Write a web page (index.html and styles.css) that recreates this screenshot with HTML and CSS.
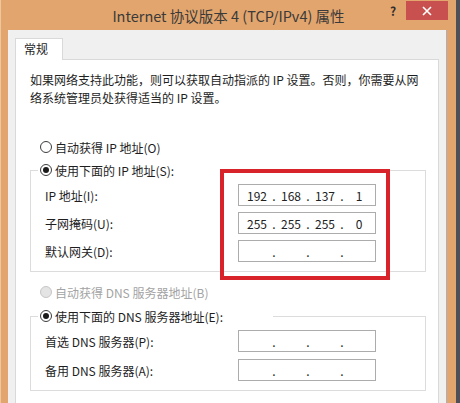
FILE: index.html
```html
<!DOCTYPE html>
<html lang="zh-CN">
<head>
  <meta charset="UTF-8">
  <title>Internet 协议版本 4 (TCP/IPv4) 属性</title>
  <link rel="stylesheet" href="styles.css">
</head>
<body>
  <div class="window">
    <div class="titlebar">
      <div></div>
      <div class="title">Internet 协议版本 4 (TCP/IPv4) 属性</div>
      <div class="title-btns">
        <span class="help-btn">?</span>
        <span class="close-btn">
          <svg width="10" height="10" viewBox="0 0 10 10"><path d="M1 1 L9 9 M9 1 L1 9" stroke="#fff" stroke-width="1.6" fill="none"/></svg>
        </span>
      </div>
    </div>

    <div class="client">
      <div class="tabs">
        <div class="tab active">常规</div>
      </div>

      <div class="tab-page">
        <p class="intro">如果网络支持此功能，则可以获取自动指派的 IP 设置。否则，你需要从网<br>络系统管理员处获得适当的 IP 设置。</p>

        <div class="radio-row first"><span class="radio"></span>自动获得 IP 地址(O)</div>

        <fieldset class="group">
          <legend class="radio-row"><span class="radio checked"></span>使用下面的 IP 地址(S):</legend>
          <div class="field-row">
            <span>IP 地址(I):</span>
            <div class="ip-box"><span class="seg">192</span><span class="dot">.</span><span class="seg">168</span><span class="dot">.</span><span class="seg">137</span><span class="dot">.</span><span class="seg">1</span></div>
          </div>
          <div class="field-row">
            <span>子网掩码(U):</span>
            <div class="ip-box"><span class="seg">255</span><span class="dot">.</span><span class="seg">255</span><span class="dot">.</span><span class="seg">255</span><span class="dot">.</span><span class="seg">0</span></div>
          </div>
          <div class="field-row">
            <span>默认网关(D):</span>
            <div class="ip-box"><span class="seg"></span><span class="dot">.</span><span class="seg"></span><span class="dot">.</span><span class="seg"></span><span class="dot">.</span><span class="seg"></span></div>
          </div>
        </fieldset>

        <div class="radio-row disabled"><span class="radio"></span>自动获得 DNS 服务器地址(B)</div>

        <fieldset class="group dns">
          <legend class="radio-row"><span class="radio checked"></span>使用下面的 DNS 服务器地址(E):</legend>
          <div class="field-row">
            <span>首选 DNS 服务器(P):</span>
            <div class="ip-box"><span class="seg"></span><span class="dot">.</span><span class="seg"></span><span class="dot">.</span><span class="seg"></span><span class="dot">.</span><span class="seg"></span></div>
          </div>
          <div class="field-row">
            <span>备用 DNS 服务器(A):</span>
            <div class="ip-box"><span class="seg"></span><span class="dot">.</span><span class="seg"></span><span class="dot">.</span><span class="seg"></span><span class="dot">.</span><span class="seg"></span></div>
          </div>
        </fieldset>

        <!-- red annotation box -->
        <div class="highlight"></div>
      </div>
    </div>
  </div>
</body>
</html>
```

FILE: styles.css
```css
/* General */
* {
  box-sizing: border-box;
}

body {
  margin: 0;
  width: 460px;
  height: 403px;
  overflow: hidden;
  background: #4f4f58;
  font-family: "Noto Sans CJK SC", "Liberation Sans", sans-serif;
  font-size: 12px;
  color: #1e1e1e;
}

/* Window frame */
.window {
  width: 456px;
  height: 403px;
  background: #e2a56d;
  border-left: 1px solid #efc79f;
  display: flex;
  flex-direction: column;
}

.titlebar {
  height: 30px;
  flex-shrink: 0;
  display: grid;
  grid-template-columns: 1fr auto 1fr;
  align-items: start;
}

.title {
  font-size: 14.5px;
  line-height: 30px;
  padding-top: 1px;
  color: #3a3a3a;
  white-space: nowrap;
}

.title-btns {
  justify-self: end;
  display: flex;
  align-items: flex-start;
}

.help-btn {
  width: 20px;
  height: 22px;
  line-height: 22px;
  text-align: center;
  font-weight: bold;
  font-size: 12px;
  color: #2e2e2e;
  margin-right: 3px;
}

.close-btn {
  width: 42px;
  height: 19px;
  margin-top: 1px;
  margin-right: 8px;
  background: #c85150;
  display: flex;
  align-items: center;
  justify-content: center;
}

/* Client area */
.client {
  flex: 1;
  width: 439px;
  margin-left: 7px;
  background: #f0f0f0;
  border-right: 1px solid #aeaebb;
  padding: 8px 0 0 7px;
}

.tabs {
  display: flex;
}

.tab {
  width: 48px;
  height: 22px;
  margin-bottom: -1px;
  padding-left: 8px;
  line-height: 20px;
  background: #fff;
  border: 1px solid #d9d9d9;
  border-bottom: none;
  position: relative;
  z-index: 1;
}

.tab-page {
  position: relative;
  width: 424px;
  height: 360px;
  background: #fff;
  border: 1px solid #d9d9d9;
  border-bottom: none;
  padding: 11px 0 0 14px;
}

.intro {
  margin: 0;
  line-height: 18px;
  white-space: nowrap;
}

/* Radios */
.radio-row {
  display: flex;
  align-items: center;
  height: 18px;
  white-space: nowrap;
}

.radio-row.first {
  margin: 31px 0 0 10px;
}

.radio-row.disabled {
  margin: 11px 0 0 10px;
  color: #a3a3a3;
}

.radio {
  width: 12px;
  height: 12px;
  margin-right: 3px;
  border: 1px solid #3c3c3c;
  border-radius: 50%;
  background: #fff;
  display: flex;
  align-items: center;
  justify-content: center;
}

.radio.checked::after {
  content: "";
  width: 6px;
  height: 6px;
  border-radius: 50%;
  background: #1a1a1a;
}

.disabled .radio {
  border-color: #c6c6c6;
  background: #e4e4e4;
}

/* Group boxes */
.group {
  width: 396px;
  margin: 5px 0 0 0;
  padding: 5px 0 9px 7px;
  border: 1px solid #dcdcdc;
  min-width: 0;
}

.group.dns {
  margin-top: 6px;
}

.group legend {
  width: 235px;
  padding: 0 0 0 2px;
}

.field-row {
  display: grid;
  grid-template-columns: 193px 138px;
  align-items: center;
  margin-left: 7px;
  height: 22px;
}

.field-row + .field-row {
  margin-top: 6px;
}

.dns .field-row + .field-row {
  margin-top: 7px;
}

.ip-box {
  height: 22px;
  border: 1px solid #acacac;
  background: #fff;
  display: flex;
  align-items: center;
  padding-left: 5px;
  color: #222;
}

.seg {
  width: 26px;
  text-align: center;
}

.dot {
  width: 8px;
  text-align: center;
}

/* Annotation */
.highlight {
  position: absolute;
  left: 204px;
  top: 109px;
  width: 170px;
  height: 111px;
  border: 4px solid #d8232a;
}
```
